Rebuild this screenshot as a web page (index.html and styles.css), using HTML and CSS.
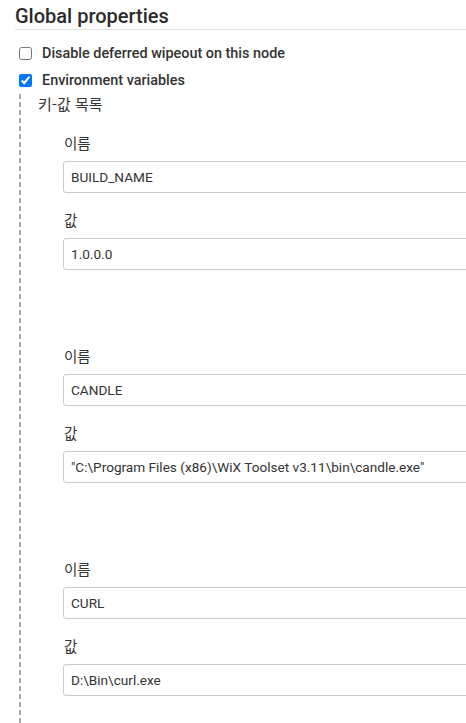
FILE: index.html
```html
<!DOCTYPE html>
<html lang="ko">
<head>
<meta charset="utf-8">
<title>Global properties</title>
<link rel="stylesheet" href="styles.css">
</head>
<body>
<div class="page">
  <h2 class="section-title">Global properties</h2>
  <div class="option">
    <input type="checkbox" id="opt1" class="option-check">
    <label for="opt1" class="option-label">Disable deferred wipeout on this node</label>
  </div>
  <div class="option">
    <input type="checkbox" id="opt2" class="option-check" checked>
    <label for="opt2" class="option-label">Environment variables</label>
  </div>
  <div class="nested">
    <div class="list-title">키-값 목록</div>
    <div class="entries">
      <div class="entry">
        <div class="field-label">이름</div>
        <input class="field-input" type="text" value="BUILD_NAME">
        <div class="field-label second">값</div>
        <input class="field-input" type="text" value="1.0.0.0">
      </div>
      <div class="entry">
        <div class="field-label">이름</div>
        <input class="field-input" type="text" value="CANDLE">
        <div class="field-label second">값</div>
        <input class="field-input" type="text" value="&quot;C:\Program Files (x86)\WiX Toolset v3.11\bin\candle.exe&quot;">
      </div>
      <div class="entry">
        <div class="field-label">이름</div>
        <input class="field-input" type="text" value="CURL">
        <div class="field-label second">값</div>
        <input class="field-input" type="text" value="D:\Bin\curl.exe">
      </div>
    </div>
  </div>
</div>
</body>
</html>
```
FILE: styles.css
```css
html, body {
  margin: 0;
  padding: 0;
  overflow: hidden;
  background: #fff;
}
body {
  font-family: Roboto, "Noto Sans CJK KR", sans-serif;
  font-size: 14px;
  color: #333;
}
.page {
  padding-left: 15px;
}
.section-title {
  margin: 3px 0 0;
  font-size: 20px;
  line-height: 26px;
  font-weight: 500;
  color: #2b2b2b;
  border-bottom: 1px solid #e2e2e2;
}
.option {
  display: flex;
  align-items: center;
  gap: 10px;
  height: 27px;
  padding-left: 4px;
}
.option:first-of-type {
  margin-top: 10px;
}
.option-check {
  margin: 0;
  width: 13px;
  height: 13px;
}
.option-label {
  font-weight: 500;
  font-size: 14.4px;
  line-height: 20px;
}
.nested {
  margin-left: 4px;
  padding-left: 19px;
  background: repeating-linear-gradient(to bottom, #aaa 0 5px, transparent 5px 8px) left top / 2px 100% no-repeat;
  padding-bottom: 80px;
}
.list-title {
  font-family: "Noto Sans CJK KR", sans-serif;
  line-height: 20px;
  font-size: 15px;
}
.entries {
  margin-top: 19px;
  padding-left: 25px;
  display: flex;
  flex-direction: column;
  gap: 76px;
}
.entry {
  display: flex;
  flex-direction: column;
}
.field-label {
  font-family: "Noto Sans CJK KR", sans-serif;
  line-height: 20px;
  margin-bottom: 8px;
  margin-left: 1px;
  font-size: 14.5px;
}
.field-label.second {
  margin-top: 17px;
}
.field-input {
  box-sizing: border-box;
  width: 440px;
  height: 32px;
  margin: 0;
  padding: 0 7px;
  border: 1px solid #ccc;
  border-radius: 3px;
  font-family: inherit;
  font-size: 13.6px;
  color: #333;
  background: #fff;
}
```
